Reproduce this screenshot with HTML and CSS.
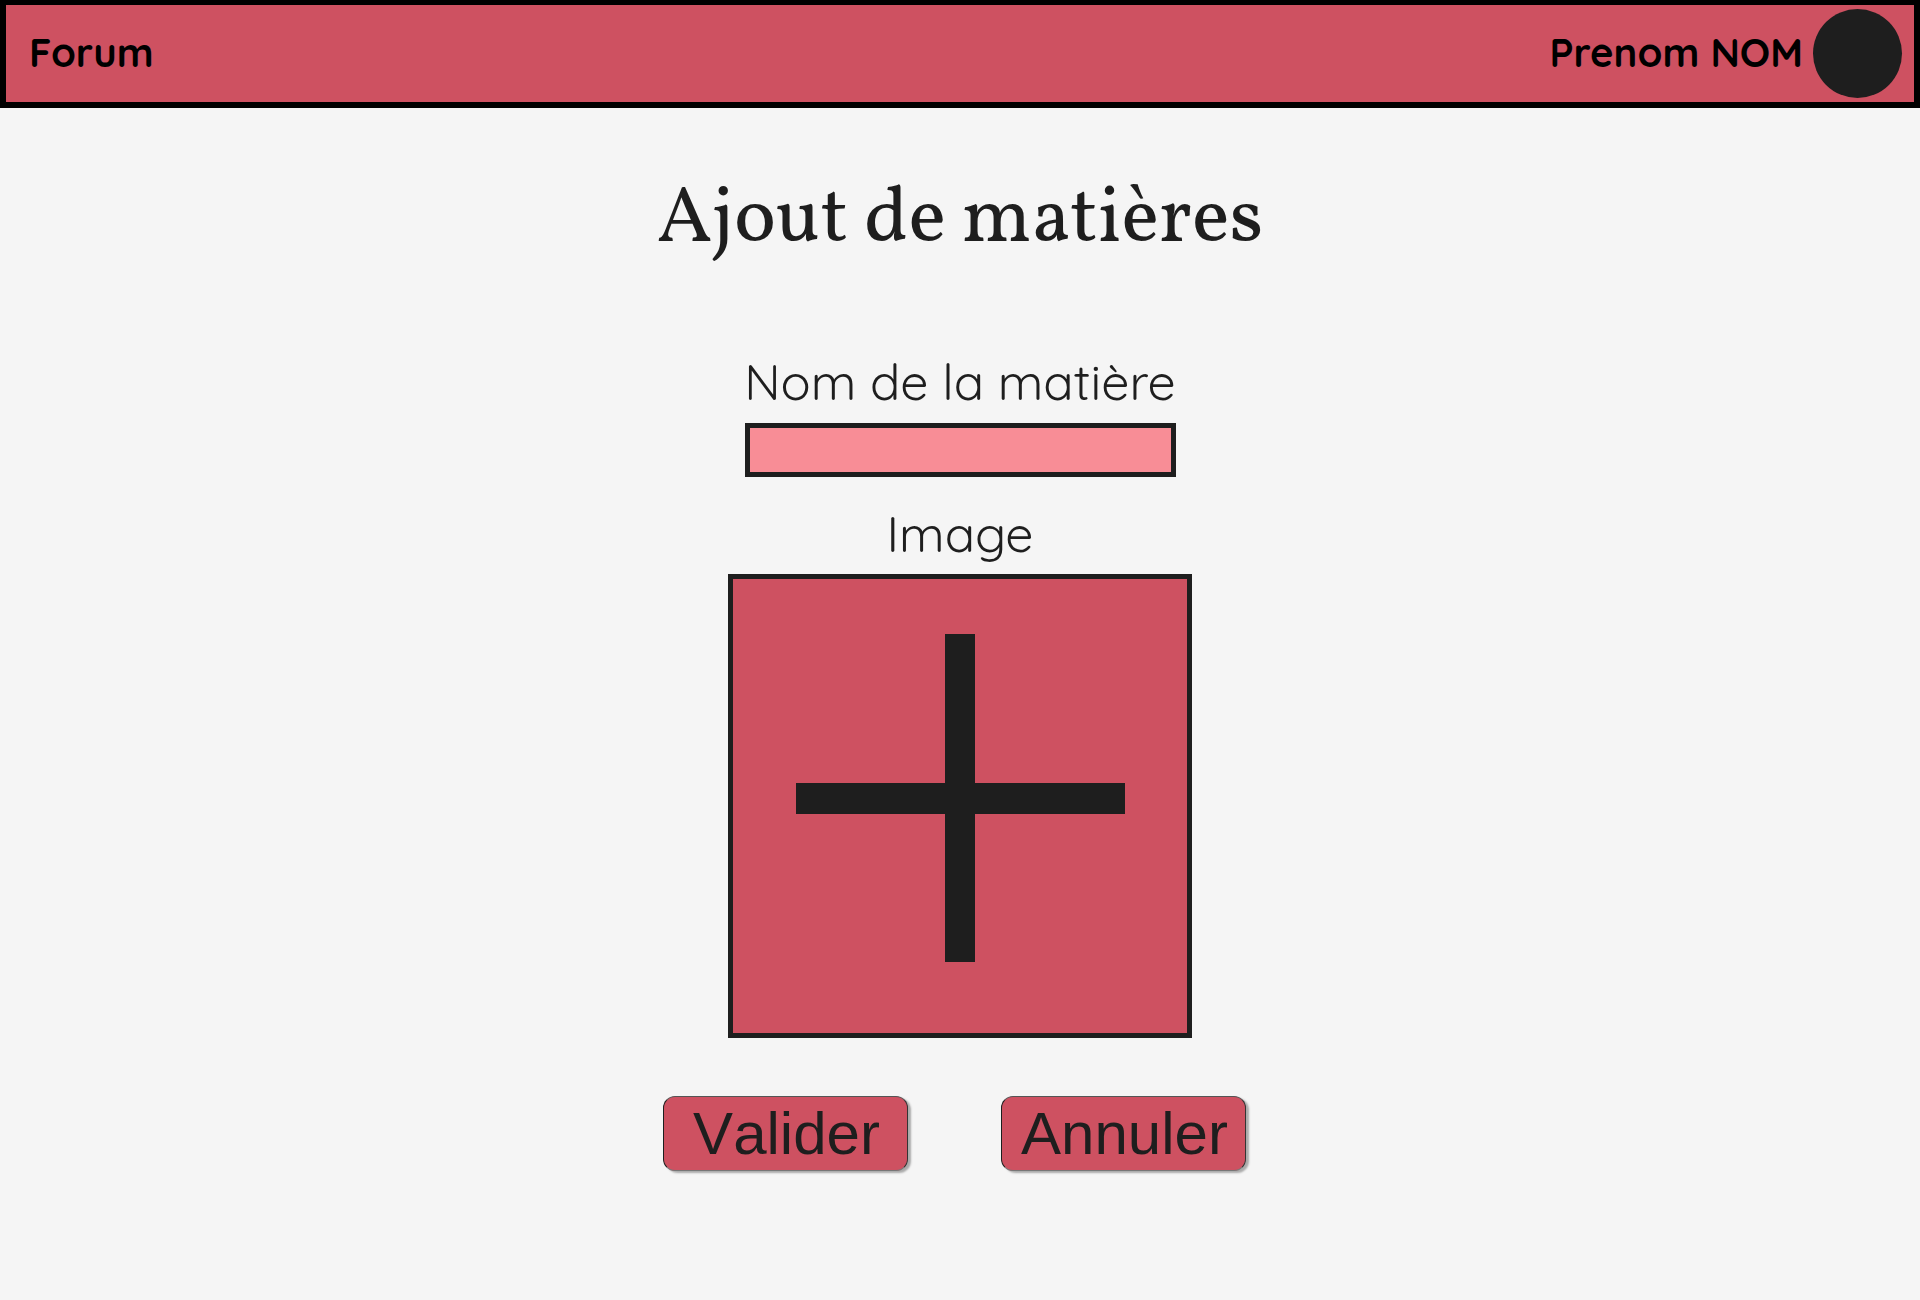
FILE: index.html
```html
<!DOCTYPE html>
<html lang="fr">
<head>
<meta charset="utf-8">
<title>Ajout de matières</title>
<meta name="viewport" content="width=device-width, initial-scale=1">
<link rel="stylesheet" href="styles.css">
</head>
<body>
<header class="topbar">
  <a class="topbar-link" href="#">Forum</a>
  <a class="profile" href="#">
    <span class="profile-name">Prenom NOM</span>
    <span class="avatar"></span>
  </a>
</header>
<main class="page">
  <h1 class="title">Ajout de matières</h1>
  <form class="form">
    <label class="label" for="nom">Nom de la matière</label>
    <input class="text-field" id="nom" type="text">
    <label class="label" for="image">Image</label>
    <button class="picker" id="image" type="button">
      <svg class="plus" viewBox="0 0 330 330" aria-hidden="true">
        <path d="M150 1h30v149h150v31H180v148h-30V181H1v-31h149z" fill="#1e1e1e"/>
      </svg>
    </button>
    <div class="actions">
      <button class="button" type="submit">Valider</button>
      <button class="button" type="button">Annuler</button>
    </div>
  </form>
</main>
</body>
</html>
```

FILE: styles.css
```css
* {
  box-sizing: border-box;
}

body {
  margin: 0;
  background: #f5f5f5;
  color: #1e1e1e;
  font-family: Quicksand, Lato, sans-serif;
}

.topbar {
  display: flex;
  align-items: center;
  justify-content: space-between;
  height: 108px;
  padding: 0 12px 0 23px;
  border: 6px solid #000;
  border-top-width: 5px;
  background: #ce5161;
  font-size: 40px;
  font-weight: 700;
  line-height: 48px;
}

.topbar-link,
.profile {
  color: #000;
  text-decoration: none;
}

.topbar-link,
.profile-name {
  padding-bottom: 4px;
}

.profile {
  display: flex;
  align-items: center;
  gap: 10px;
}

.avatar {
  width: 89px;
  height: 89px;
  border-radius: 50%;
  background: #1e1e1e;
}

.page {
  padding: 65px 24px;
}

.title {
  margin: 0;
  font-family: Vollkorn, "Liberation Serif", serif;
  font-size: 79px;
  font-weight: 400;
  line-height: 96px;
  text-align: center;
}

.form {
  display: flex;
  flex-direction: column;
  align-items: center;
  margin-top: 83px;
}

.label {
  font-size: 50px;
  font-weight: 400;
  line-height: 60px;
}

.text-field {
  width: 431px;
  max-width: 100%;
  height: 54px;
  margin: 11px 0 27px;
  padding: 0 12px;
  border: 5px solid #1e1e1e;
  border-radius: 0;
  background: #f88d96;
  color: #1e1e1e;
  font: 400 32px/40px Quicksand, Lato, sans-serif;
}

.picker {
  display: flex;
  align-items: center;
  justify-content: center;
  width: 464px;
  max-width: 100%;
  aspect-ratio: 1;
  margin-top: 10px;
  padding: 0 0 16px;
  border: 5px solid #1e1e1e;
  background: #ce5161;
}

.plus {
  width: 330px;
  height: 330px;
}

.actions {
  display: flex;
  flex-wrap: wrap;
  justify-content: center;
  gap: 24px 93px;
  margin-top: 58px;
  padding-right: 12px;
}

.button {
  width: 245px;
  height: 75px;
  padding: 0 0 0 3px;
  border: 1px solid #1e1e1e;
  border-color: #555 #333 #777 #1e1e1e;
  border-radius: 12px;
  background: #ce5161;
  box-shadow: 3px 2px 2px #aaa;
  color: #1e1e1e;
  font: 60px/72px "Liberation Sans", Arial, sans-serif;
  font-kerning: none;
}
```
